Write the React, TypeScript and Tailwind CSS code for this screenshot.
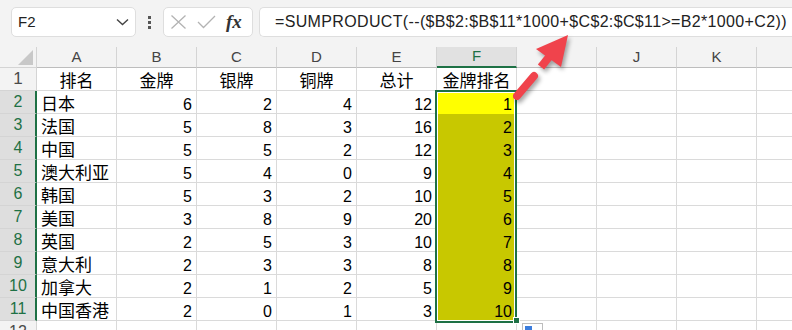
import React from 'react';

const font = "font-['Liberation_Sans','Noto_Sans_CJK_SC',sans-serif]";

interface Row {
    name: string;
    gold: number;
    silver: number;
    bronze: number;
    total: number;
    rank: number;
}

const rows: Row[] = [
    { name: '日本', gold: 6, silver: 2, bronze: 4, total: 12, rank: 1 },
    { name: '法国', gold: 5, silver: 8, bronze: 3, total: 16, rank: 2 },
    { name: '中国', gold: 5, silver: 5, bronze: 2, total: 12, rank: 3 },
    { name: '澳大利亚', gold: 5, silver: 4, bronze: 0, total: 9, rank: 4 },
    { name: '韩国', gold: 5, silver: 3, bronze: 2, total: 10, rank: 5 },
    { name: '美国', gold: 3, silver: 8, bronze: 9, total: 20, rank: 6 },
    { name: '英国', gold: 2, silver: 5, bronze: 3, total: 10, rank: 7 },
    { name: '意大利', gold: 2, silver: 3, bronze: 3, total: 8, rank: 8 },
    { name: '加拿大', gold: 2, silver: 1, bronze: 2, total: 5, rank: 9 },
    { name: '中国香港', gold: 2, silver: 0, bronze: 1, total: 3, rank: 10 },
];

const columns = ['A', 'B', 'C', 'D', 'E', 'F', 'I', 'J', 'K', 'L'];
const headers = ['排名', '金牌', '银牌', '铜牌', '总计', '金牌排名'];

function Cell({ children, align = 'left', className = '' }: { children?: React.ReactNode; align?: 'left' | 'right' | 'center'; className?: string }) {
    const justify = align === 'right' ? 'justify-end pr-[4px]' : align === 'center' ? 'justify-center' : 'justify-start pl-[4px]';
    return (
        <div className={`w-[80px] shrink-0 h-full flex items-end leading-[16px] border-r border-b border-[#dadada] bg-white whitespace-nowrap ${justify} ${className}`}>
            {children}
        </div>
    );
}

function RowHeader({ n, selected }: { n: number; selected?: boolean }) {
    return (
        <div
            className={`w-[37px] shrink-0 h-full flex items-center justify-center border-b border-[#d4d4d4] ${
                selected
                    ? 'bg-[#dedede] text-[#1e7145] border-r-2 border-r-[#1e7145] pl-[1px]'
                    : 'bg-[#f3f3f3] text-[#4a4a4a] border-r border-r-[#d4d4d4]'
            }`}
        >
            {n}
        </div>
    );
}

function Blank({ count }: { count: number }) {
    return (
        <>
            {Array.from({ length: count }).map((_, i) => (
                <Cell key={i} />
            ))}
        </>
    );
}

export default function App() {
    return (
        <div className={`relative w-[792px] h-[330px] overflow-hidden bg-[#f3f3f3] text-[16px] text-black ${font}`}>
            {/* Formula bar */}
            <div className="h-[47px] flex items-start pt-[7px] pl-[11px]">
                <div className="w-[125px] h-[30px] bg-white border border-[#dedede] rounded-[5px] flex items-center pl-[6px] pr-[6px]">
                    <span className="text-[15px] text-[#222] flex-1">F2</span>
                    <svg width="13" height="8" viewBox="0 0 13 8">
                        <path d="M1 1.5 L6.5 6.5 L12 1.5" fill="none" stroke="#444" strokeWidth="1.4" />
                    </svg>
                </div>
                <div className="w-[27px] h-[30px] flex flex-col items-center justify-center gap-[2px]">
                    <div className="w-[3px] h-[3px] bg-[#555]" />
                    <div className="w-[3px] h-[3px] bg-[#555]" />
                    <div className="w-[3px] h-[3px] bg-[#555]" />
                </div>
                <div className="w-[90px] h-[30px] bg-white border border-[#dedede] rounded-[5px] flex items-center pl-[6px] gap-[10px]">
                    <svg width="17" height="14" viewBox="0 0 17 14">
                        <path d="M1.5 0.5 L15.5 13.5 M15.5 0.5 L1.5 13.5" stroke="#b3b3b3" strokeWidth="1.3" />
                    </svg>
                    <svg width="19" height="14" viewBox="0 0 19 14">
                        <path d="M1 7 L6.5 12.5 L18 1" fill="none" stroke="#b3b3b3" strokeWidth="1.3" />
                    </svg>
                    <span className="font-['Liberation_Serif',serif] italic font-bold text-[19px] text-[#333] leading-none -mt-[2px]">fx</span>
                </div>
                <div className="ml-[6px] flex-1 h-[30px] bg-white border border-[#dedede] border-r-0 rounded-l-[5px] flex items-center pl-[15px] whitespace-nowrap overflow-hidden text-[#222] tracking-[0.35px]">
                    =SUMPRODUCT(--($B$2:$B$11*1000+$C$2:$C$11&gt;=B2*1000+C2))
                </div>
            </div>

            {/* Column headers */}
            <div className="h-[21px] flex text-[15px] text-[#444]">
                <div className="w-[37px] shrink-0 h-full border-r border-b border-[#d4d4d4] flex items-end justify-end pr-[3px] pb-[2px]">
                    <svg width="15" height="15" viewBox="0 0 15 15">
                        <path d="M15 0 L15 15 L0 15 Z" fill="#c8c8c8" />
                    </svg>
                </div>
                {columns.map((c) => (
                    <div
                        key={c}
                        className={`w-[80px] shrink-0 h-full flex items-center justify-center border-r border-[#d4d4d4] ${
                            c === 'F' ? 'bg-[#e1e1e1] text-[#1e7145] border-b-2 border-b-[#1e7145]' : 'border-b border-b-[#bdbdbd]'
                        }`}
                    >
                        {c}
                    </div>
                ))}
            </div>

            {/* Row 1 */}
            <div className="h-[23px] flex text-[17px]">
                <RowHeader n={1} />
                {headers.map((h) => (
                    <Cell key={h} align="center">{h}</Cell>
                ))}
                <Blank count={4} />
            </div>

            {/* Data rows */}
            {rows.map((r, i) => (
                <div key={r.name} className="h-[23px] flex">
                    <RowHeader n={i + 2} selected />
                    <Cell className="text-[17px]">{r.name}</Cell>
                    <Cell align="right">{r.gold}</Cell>
                    <Cell align="right">{r.silver}</Cell>
                    <Cell align="right">{r.bronze}</Cell>
                    <Cell align="right">{r.total}</Cell>
                    <Cell
                        align="right"
                        className={i === 0 ? '!bg-[#ffff00] !border-b-[#ffff00]' : '!bg-[#c8c800] !border-b-[#c8c800]'}
                    >
                        {r.rank}
                    </Cell>
                    <Blank count={4} />
                </div>
            ))}

            {/* Row 12 */}
            <div className="h-[23px] flex">
                <RowHeader n={12} />
                <Blank count={10} />
            </div>

            {/* Selection border */}
            <div className="absolute left-[435px] top-[90px] w-[82px] h-[233px] border-2 border-[#1e7145] pointer-events-none">
                <div className="w-full h-full border border-white" />
            </div>
            {/* Fill handle */}
            <div className="absolute left-[513px] top-[317px] w-[7px] h-[7px] bg-[#1e7145] border border-white" />

            {/* Quick analysis button */}
            <div className="absolute left-[522px] top-[323px] w-[21px] h-[12px] bg-white border border-[#bdbdbd] p-[2px]">
                <div className="w-[7px] h-[5px] bg-[#3b7ddd]" />
            </div>

            {/* Red arrow annotation */}
            <svg
                className="absolute left-0 top-0 drop-shadow-[2px_3px_2px_rgba(0,0,0,0.35)] pointer-events-none"
                width="792"
                height="330"
                viewBox="0 0 792 330"
            >
                <line x1="517" y1="96" x2="534" y2="76" stroke="#f0434c" strokeWidth="8" strokeLinecap="round" />
                <line x1="541" y1="67" x2="549" y2="57" stroke="#f0434c" strokeWidth="8" strokeLinecap="butt" />
                <polygon points="568,35 536,49 561,67" fill="#f0434c" />
            </svg>
        </div>
    );
}
